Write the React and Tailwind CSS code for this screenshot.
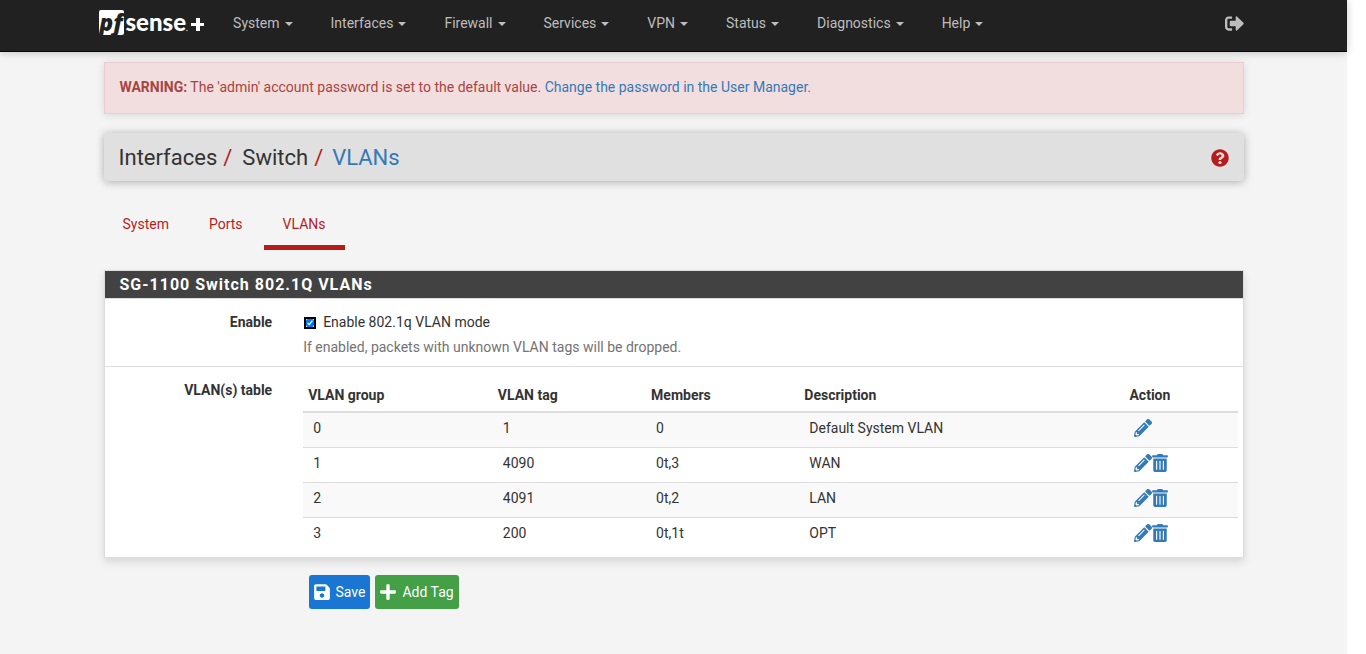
import { useState } from 'react';
import { FaPencilAlt, FaPlus, FaQuestionCircle, FaSave, FaSignOutAlt, FaTrashAlt } from 'react-icons/fa';

const menuItems = ['System', 'Interfaces', 'Firewall', 'Services', 'VPN', 'Status', 'Diagnostics', 'Help'];

const tabs = ['System', 'Ports', 'VLANs'];

const vlans = [
  { group: 0, tag: 1, members: '0', description: 'Default System VLAN', locked: true },
  { group: 1, tag: 4090, members: '0t,3', description: 'WAN' },
  { group: 2, tag: 4091, members: '0t,2', description: 'LAN' },
  { group: 3, tag: 200, members: '0t,1t', description: 'OPT' },
];

const Logo = () => (
  <a href="#home" aria-label="pfSense+" className="flex items-center pb-px mr-[10px] text-white font-['Lato',sans-serif]">
    <span className="flex justify-center w-[25px] h-[25px] rounded-[2px] bg-white text-[#212121] text-[23px] font-extrabold italic leading-[25px] font-['Open_Sans',sans-serif]">
      pf
    </span>
    <span className="ml-[2px] pb-[2px] text-[24px] font-black leading-[25px]">sense</span>
    <svg viewBox="0 0 18 25" className="w-[18px] h-[25px]" fill="currentColor" aria-hidden="true">
      <circle cx="1" cy="20.5" r="0.8" opacity="0.7" />
      <path d="M10 8h4v5h4v3h-4v5h-4v-5H5v-3h5z" />
    </svg>
  </a>
);

const Navbar = () => (
  <header className="bg-[#212121] border-b border-[#080808] shadow-[0_1px_8px_rgba(0,0,0,0.2)]">
    <div className="max-w-[1180px] mx-auto px-[15px] h-[51px] flex items-center pb-[5px]">
      <Logo />
      <nav className="flex grow">
        {menuItems.map((item) => (
          <a key={item} href={`#${item.toLowerCase()}`} className="flex items-center px-[19px] text-[#bdbdbd] hover:text-white">
            {item}
            <svg viewBox="0 0 8 4" className="w-2 h-1 ml-[5px] mt-[2px]" fill="currentColor" aria-hidden="true">
              <path d="M0 0h8L4 4z" />
            </svg>
          </a>
        ))}
      </nav>
      <a href="#logout" aria-label="Logout" className="text-[#bdbdbd] text-[19px] mr-[5px]">
        <FaSignOutAlt />
      </a>
    </div>
  </header>
);

const VlanTable = () => (
  <table className="w-full table-fixed text-left">
    <thead>
      <tr className="border-b-2 border-[#ddd]">
        <th className="w-[20.3%] px-[5px] pt-[2px] h-[35px]">VLAN group</th>
        <th className="w-[16.4%] px-[5px] pt-[2px]">VLAN tag</th>
        <th className="w-[16.4%] px-[5px] pt-[2px]">Members</th>
        <th className="w-[34.8%] px-[5px] pt-[2px]">Description</th>
        <th className="px-[5px] pt-[2px]">Action</th>
      </tr>
    </thead>
    <tbody>
      {vlans.map((vlan) => (
        <tr key={vlan.group} className="h-[35px] border-b border-[#ddd] last:border-b-0 odd:bg-[#f9f9f9]">
          <td className="px-[10px] pb-1">{vlan.group}</td>
          <td className="px-[10px] pb-1">{vlan.tag}</td>
          <td className="px-[10px] pb-1">{vlan.members}</td>
          <td className="px-[10px] pb-1">{vlan.description}</td>
          <td className="px-[10px] pb-1">
            <div className="flex text-[18px] text-[#337ab7]">
              <a href={`#edit-${vlan.group}`} aria-label="Edit VLAN">
                <FaPencilAlt />
              </a>
              {!vlan.locked && (
                <a href={`#delete-${vlan.group}`} aria-label="Delete VLAN">
                  <FaTrashAlt className="w-4" />
                </a>
              )}
            </div>
          </td>
        </tr>
      ))}
    </tbody>
  </table>
);

const App = () => {
  const [enabled, setEnabled] = useState(true);

  return (
    <div className="mr-[19px] min-h-screen bg-[#f4f4f4] text-[#333] text-sm font-['Roboto',sans-serif]">
      <Navbar />

      <main className="max-w-[1170px] mx-auto px-[15px] pt-[10px]">
        <div className="px-[15px] pt-[14px] pb-4 border border-[#ebccd1] bg-[#f2dede] text-[#a94442] shadow-[0_1px_8px_rgba(0,0,0,0.12)]">
          <strong>WARNING:</strong> The 'admin' account password is set to the default value.{' '}
          <a href="#user-manager" className="text-[#337ab7]">Change the password in the User Manager.</a>
        </div>

        <div className="flex items-center justify-between mt-[19px] h-[48px] px-[15px] pt-[2px] rounded-sm bg-[#e0e0e0] shadow-[0_1px_8px_rgba(0,0,0,0.3)]">
          <h1 className="flex text-[22px]">
            Interfaces
            <span className="mx-[6px] text-[#b71c1c]">/</span>
            <span className="ml-1">Switch</span>
            <span className="mx-[6px] text-[#b71c1c]">/</span>
            <a href="#vlans" className="ml-[3px] text-[#337ab7]">VLANs</a>
          </h1>
          <a href="#help" aria-label="Help for this page" className="text-[#b71c1c] text-[18px]">
            <FaQuestionCircle />
          </a>
        </div>

        <nav className="flex mt-[18px]">
          {tabs.map((tab) => (
            <a
              key={tab}
              href={`#tab-${tab.toLowerCase()}`}
              className={`h-[51px] px-[19px] pt-[15px] mr-[2px] text-[#b71c1c] border-b-[5px] ${tab === 'VLANs' ? 'border-[#b71c1c]' : 'border-transparent'}`}
            >
              {tab}
            </a>
          ))}
        </nav>

        <section className="mt-5 border border-[#ddd] bg-white shadow-[0_4px_8px_rgba(0,0,0,0.12)]">
          <h2 className="h-7 px-[15px] bg-[#424242] border-b border-[#ddd] text-white text-base leading-[27px] font-bold tracking-[1px]">
            SG-1100 Switch 802.1Q VLANs
          </h2>
          <div className="flex h-[68px] pt-[13px] border-b border-[#ddd]">
            <div className="w-1/6 pr-[22px] text-right font-bold">Enable</div>
            <div className="grow pl-[9px]">
              <label className="flex items-center">
                <input
                  type="checkbox"
                  checked={enabled}
                  onChange={(e) => setEnabled(e.target.checked)}
                  className="w-2 h-2 ml-[3px] mr-[9px] mt-[2px] outline-2 outline-black rounded-[2px]"
                />
                Enable 802.1q VLAN mode
              </label>
              <p className="mt-[5px] text-[#737373]">If enabled, packets with unknown VLAN tags will be dropped.</p>
            </div>
          </div>
          <div className="flex pt-[10px] pb-[5px]">
            <div className="w-1/6 shrink-0 pt-[3px] pr-[22px] text-right font-bold">VLAN(s) table</div>
            <div className="grow pl-[9px] pr-[5px]">
              <VlanTable />
            </div>
          </div>
        </section>

        <div className="flex gap-[5px] mt-[17px] pl-[205px] text-white">
          <button type="submit" className="flex items-center h-[34px] pl-1 pr-[5px] pb-px gap-[5px] rounded-[3px] bg-[#1976d2]">
            <FaSave className="w-[18px] h-[18px]" />
            Save
          </button>
          <button type="button" className="flex items-center h-[34px] pl-1 pr-[5px] pb-px gap-[5px] rounded-[3px] bg-[#43a047]">
            <FaPlus className="w-[18px] h-[18px]" />
            Add Tag
          </button>
        </div>
      </main>
    </div>
  );
};

export default App;
